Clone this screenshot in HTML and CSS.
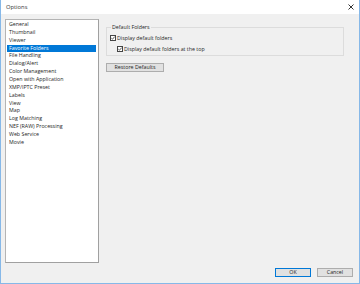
FILE: index.html
```html
<html>
<head>
  <meta http-equiv="Content-Type" content="text/html; charset=UTF-8"/>
  <title>Options</title>
  <link rel="stylesheet" href="styles.css">
</head>

<body>
<div class="window">
  <div class="titlebar">
    <span class="title">Options</span>
    <svg class="close" width="6" height="6" viewBox="0 0 6 6"><path d="M0.5 0.5L5.5 5.5M5.5 0.5L0.5 5.5" stroke="#333" stroke-width="1"/></svg>
  </div>

  <div class="main">
    <div class="list">
      <div class="item">General</div>
      <div class="item">Thumbnail</div>
      <div class="item">Viewer</div>
      <div class="item selected">Favorite Folders</div>
      <div class="item">File Handling</div>
      <div class="item">Dialog/Alert</div>
      <div class="item">Color Management</div>
      <div class="item">Open with Application</div>
      <div class="item">XMP/IPTC Preset</div>
      <div class="item">Labels</div>
      <div class="item">View</div>
      <div class="item">Map</div>
      <div class="item">Log Matching</div>
      <div class="item">NEF (RAW) Processing</div>
      <div class="item">Web Service</div>
      <div class="item">Movie</div>
    </div>

    <div class="panel">
      <fieldset class="group">
        <legend>Default Folders</legend>
        <div class="check">
          <svg class="box" width="6" height="6" viewBox="0 0 6 6"><rect x="0.5" y="0.5" width="5" height="5" fill="#fff" stroke="#444"/><path d="M1.3 3.1L2.5 4.2L4.7 1.6" fill="none" stroke="#333" stroke-width="0.8"/></svg>
          Display default folders
        </div>
        <div class="check sub">
          <svg class="box" width="6" height="6" viewBox="0 0 6 6"><rect x="0.5" y="0.5" width="5" height="5" fill="#fff" stroke="#444"/><path d="M1.3 3.1L2.5 4.2L4.7 1.6" fill="none" stroke="#333" stroke-width="0.8"/></svg>
          Display default folders at the top
        </div>
      </fieldset>
      <div><button class="btn restore">Restore Defaults</button></div>
    </div>
  </div>

  <div class="footer">
    <button class="btn default">OK</button>
    <button class="btn">Cancel</button>
  </div>
</div>
</body>
</html>
```

FILE: styles.css
```css
body {margin: 0; font-family: "Open Sans", "Noto Sans", sans-serif; font-size: 5.3px; color: #1e1e1e}

.window {width: 360px; height: 284px; box-sizing: border-box; border: 1px solid #86b8e8; border-top: none; background: #f0f0f0; display: flex; flex-direction: column}

.titlebar {height: 14px; background: #fff; display: flex; align-items: center; justify-content: space-between; padding: 0 5px 0 5px}
.title {font-size: 5.8px; color: #333}

.main {flex: 1; display: flex; padding: 5px 0 0 4px}

.list {width: 94px; box-sizing: border-box; border: 1px solid #b4b4b4; border-right-color: #a0a0a0; border-bottom-color: #a0a0a0; background: #fff; padding: 1px 2px 0 1px}
.item {height: 7.87px; line-height: 7.87px; padding-left: 2px; white-space: nowrap}
.item.selected {background: #0078d7; color: #fff}

.panel {margin-left: 7px; padding-top: 5px}

.group {width: 238px; height: 32px; box-sizing: border-box; margin: 0; border: 1px solid #dcdcdc; padding: 2px 3px 0 3px}
.group legend {padding: 0 1px; margin-left: 1px; line-height: 6px}

.check {display: flex; align-items: center; height: 11px; white-space: nowrap}
.check.sub {padding-left: 7px}
.box {flex: none; margin-right: 1px}

.btn {font-family: inherit; font-size: 5.3px; height: 9px; padding: 0; margin: 0; border: 1px solid #adadad; background: #e1e1e1; color: #1e1e1e; box-sizing: border-box; line-height: 7px}
.restore {width: 58px; margin-top: 7px}

.footer {display: flex; justify-content: flex-end; gap: 6px; padding: 5px 6px 6px 0}
.footer .btn {width: 36px}
.btn.default {border-color: #0078d7}
```
